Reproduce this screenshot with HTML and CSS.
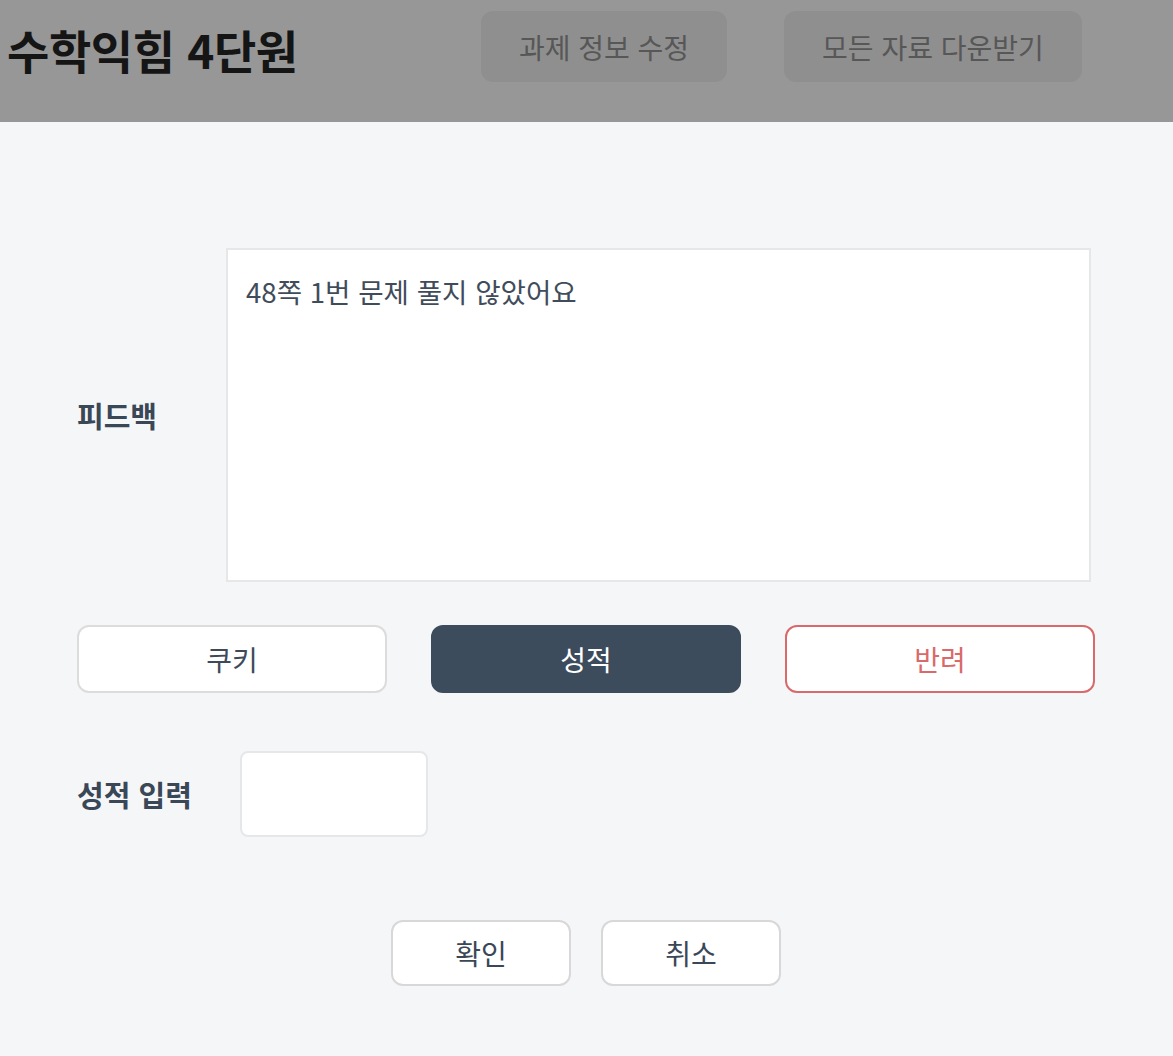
FILE: index.html
```html
<!DOCTYPE html>
<html lang="ko">
<head>
<meta charset="utf-8">
<link rel="stylesheet" href="styles.css">
</head>
<body>
<header class="top">
  <h1 class="title">수학익힘 4단원</h1>
  <div class="top-actions">
    <button class="top-btn top-btn-edit">과제 정보 수정</button>
    <button class="top-btn top-btn-dl">모든 자료 다운받기</button>
  </div>
</header>
<main class="sheet">
  <div class="row feedback-row">
    <label class="label">피드백</label>
    <div class="feedback-box">48쪽 1번 문제 풀지 않았어요</div>
  </div>
  <div class="choice-row">
    <button class="choice">쿠키</button>
    <button class="choice choice-active">성적</button>
    <button class="choice choice-reject">반려</button>
  </div>
  <div class="row score-row">
    <label class="label">성적 입력</label>
    <div class="score-input"></div>
  </div>
  <div class="footer-actions">
    <button class="foot-btn">확인</button>
    <button class="foot-btn">취소</button>
  </div>
</main>
</body>
</html>
```
FILE: styles.css
```css
* { box-sizing: border-box; }
html, body {
  margin: 0;
  padding: 0;
}
body {
  font-family: "Noto Sans CJK KR", "Noto Sans", sans-serif;
  background: #f5f6f8;
  width: 1173px;
  height: 1056px;
  overflow: hidden;
}
button {
  font-family: inherit;
  cursor: pointer;
}
.top {
  height: 122px;
  background: #979797;
  display: flex;
  align-items: flex-start;
  padding: 11px 0 0 7px;
}
.title {
  margin: 0;
  font-size: 46px;
  font-weight: 700;
  color: #151515;
  line-height: 76px;
  letter-spacing: -0.4px;
  width: 474px;
}
.top-actions {
  display: flex;
  gap: 57px;
}
.top-btn {
  height: 71px;
  border: none;
  border-radius: 12px;
  background: #8f8f8f;
  color: #575757;
  font-size: 28px;
  font-weight: 400;
  padding: 0;
}
.top-btn-edit { width: 246px; }
.top-btn-dl { width: 298px; }

.sheet {
  padding: 126px 0 0 77px;
}
.row {
  display: flex;
  align-items: center;
}
.label {
  font-size: 29px;
  font-weight: 600;
  color: #3a4757;
  line-height: 40px;
}
.feedback-row .label { width: 149px; }
.feedback-box {
  width: 865px;
  height: 334px;
  background: #fff;
  border: 2px solid #e6e7e9;
  padding: 22px 18px;
  font-size: 27.6px;
  line-height: 38px;
  color: #414c5b;
}
.choice-row {
  display: flex;
  gap: 44px;
  margin-top: 43px;
}
.choice {
  width: 310px;
  height: 68px;
  border-radius: 12px;
  border: 2px solid #dcdcdc;
  background: #fff;
  color: #3f4a59;
  font-size: 28px;
  padding: 0;
}
.choice-active {
  background: #3d4c5c;
  border-color: #3d4c5c;
  color: #fff;
}
.choice-reject {
  border-color: #d9696a;
  color: #d9696a;
}
.score-row {
  margin-top: 58px;
}
.score-row .label { width: 163px; }
.score-input {
  width: 188px;
  height: 86px;
  background: #fff;
  border: 2px solid #e6e7e9;
  border-radius: 8px;
}
.footer-actions {
  width: 1018px;
  display: flex;
  justify-content: center;
  gap: 30px;
  margin-top: 83px;
}
.foot-btn {
  width: 180px;
  height: 66px;
  border-radius: 12px;
  border: 2px solid #d8d8d8;
  background: #fff;
  color: #3a4757;
  font-size: 28px;
  padding: 0;
}
```
